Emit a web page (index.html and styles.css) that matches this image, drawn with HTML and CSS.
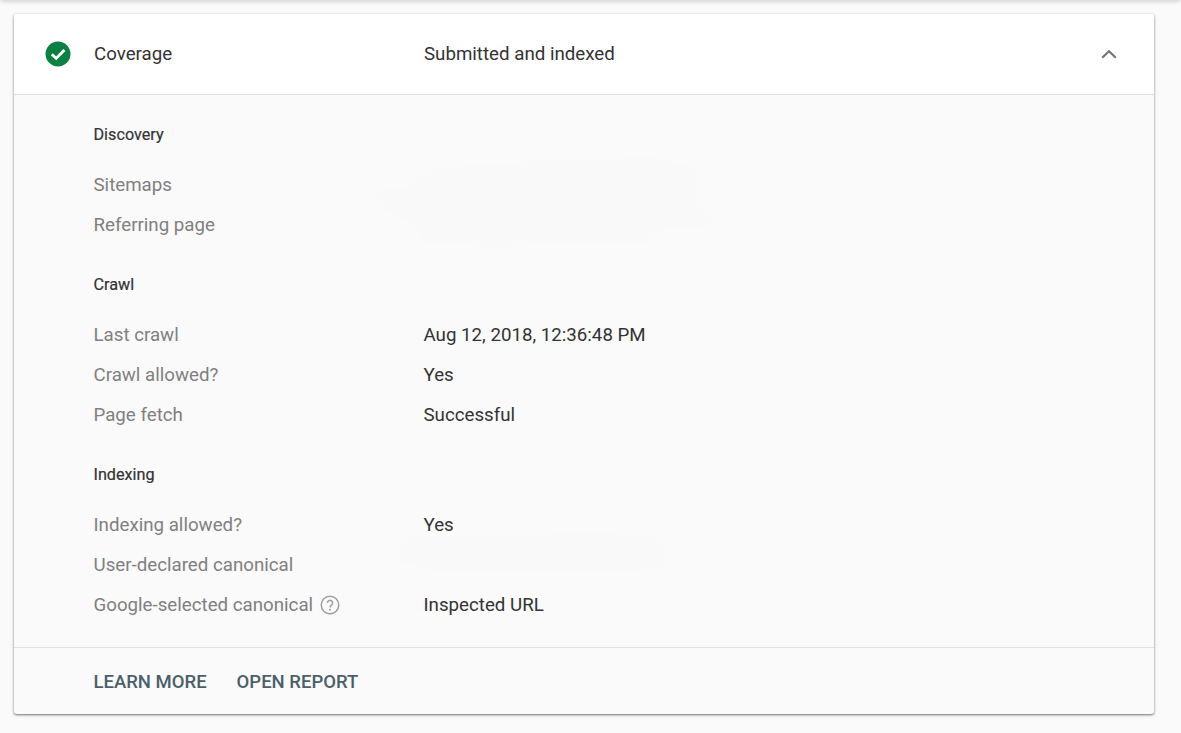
FILE: index.html
```html
<!DOCTYPE html>
<html lang="en">
<head>
<meta charset="utf-8">
<title>Coverage</title>
<link rel="stylesheet" href="styles.css">
</head>
<body>
<div class="topbar"></div>
<main class="card">
  <header class="card-head">
    <svg class="status" width="26" height="26" viewBox="0 0 26 26"><circle cx="13" cy="13" r="12.500" fill="#0b8043"/><path d="M6.800 13.200l4.400 4.200 8.200-8.400" fill="none" stroke="#fff" stroke-width="2.800"/></svg>
    <span class="label-main">Coverage</span>
    <span class="value">Submitted and indexed</span>
    <svg class="chev" width="16" height="10" viewBox="0 0 16 10"><path d="M1.200 8.800L8 2.200l6.800 6.600" fill="none" stroke="#757575" stroke-width="2.200"/></svg>
  </header>
  <div class="card-body">
    <section class="group">
      <h2>Discovery</h2>
      <div class="row"><span class="key">Sitemaps</span></div>
      <div class="row"><span class="key">Referring page</span></div>
      <svg class="smudge smudge-a" width="360" height="100" viewBox="0 0 360 100"><path d="M0 37L40 32 60 15 130 8 210 5 290 2 330 14 332 45 355 68 320 75 300 72 280 88 200 90 120 92 60 88 45 70 10 48z" fill="#f9f9f9"/></svg>
    </section>
    <section class="group">
      <h2>Crawl</h2>
      <div class="row"><span class="key">Last crawl</span><span class="val">Aug 12, 2018, 12:36:48 PM</span></div>
      <div class="row"><span class="key">Crawl allowed?</span><span class="val">Yes</span></div>
      <div class="row"><span class="key">Page fetch</span><span class="val">Successful</span></div>
    </section>
    <section class="group">
      <h2>Indexing</h2>
      <div class="row"><span class="key">Indexing allowed?</span><span class="val">Yes</span></div>
      <div class="row"><span class="key">User-declared canonical</span></div>
      <div class="row"><span class="key">Google-selected canonical<svg class="help" width="20" height="20" viewBox="0 0 20 20"><circle cx="10" cy="10" r="8.750" fill="none" stroke="#9e9e9e" stroke-width="1.500"/><path d="M7.400 8a2.600 2.600 0 1 1 4.200 2c-1 .8-1.600 1.200-1.600 2.600" fill="none" stroke="#9e9e9e" stroke-width="1.500"/><circle cx="10" cy="14.800" r="1" fill="#9e9e9e"/></svg></span><span class="val">Inspected URL</span></div>
      <svg class="smudge smudge-b" width="270" height="44" viewBox="0 0 270 44"><path d="M6 6L120 4 205 2 268 6 268 38 180 42 40 40 4 30z" fill="#f9f9f9"/></svg>
    </section>
  </div>
  <footer class="card-foot">
    <a class="action">LEARN MORE</a>
    <a class="action">OPEN REPORT</a>
  </footer>
</main>
</body>
</html>
```
FILE: styles.css
```css
* { box-sizing: border-box; }
html, body { margin: 0; height: 100%; }
body {
  background: #fafafa;
  font-family: Roboto, "Liberation Sans", sans-serif;
  color: #333;
  padding: 14px 27px 0 14px;
  overflow: hidden;
  position: relative;
}
.topbar {
  position: absolute;
  left: 0;
  right: 0;
  top: -4px;
  height: 4px;
  box-shadow: 0 1px 5px rgba(0, 0, 0, .22);
}
.card {
  height: 700px;
  background: #fafafa;
  border-radius: 3px;
  box-shadow: 0 1px 2px rgba(0, 0, 0, .42), 0 1px 3px 1px rgba(0, 0, 0, .12);
  display: flex;
  flex-direction: column;
  overflow: hidden;
}
.card-head {
  height: 81px;
  flex: none;
  background: #fff;
  border-bottom: 1px solid #e0e0e0;
  display: flex;
  align-items: center;
  padding: 0 37px 0 31px;
  font-size: 18.720px;
}
.status { flex: none; margin-right: 23px; }
.label-main { width: 330px; }
.value { flex: 1; }
.chev { flex: none; }
.card-body {
  flex: 1;
  padding: 20px 0 0 79.500px;
}
.group { margin-bottom: 20px; position: relative; }
.group h2 {
  margin: 0 0 10px;
  height: 40px;
  line-height: 39px;
  font-size: 16.200px;
  font-weight: 400;
  -webkit-text-stroke: .2px #333;
  color: #333;
}
.row { height: 40px; display: flex; align-items: center; font-size: 18.720px; padding-bottom: 1px; }
.key { width: 330px; flex: none; color: #808080; display: flex; align-items: center; }
.val { color: #333; }
.help { margin-left: 7px; }
.smudge { position: absolute; pointer-events: none; }
.smudge-a { left: 272px; top: 40px; }
.smudge-b { left: 301px; top: 76px; }
.card-foot {
  height: 67px;
  flex: none;
  border-top: 1px solid #e0e0e0;
  display: flex;
  align-items: center;
  gap: 30px;
  padding: 1px 0 0 79.500px;
  font-size: 18.500px;
  font-weight: 500;
  color: #4a5f69;
}
```
